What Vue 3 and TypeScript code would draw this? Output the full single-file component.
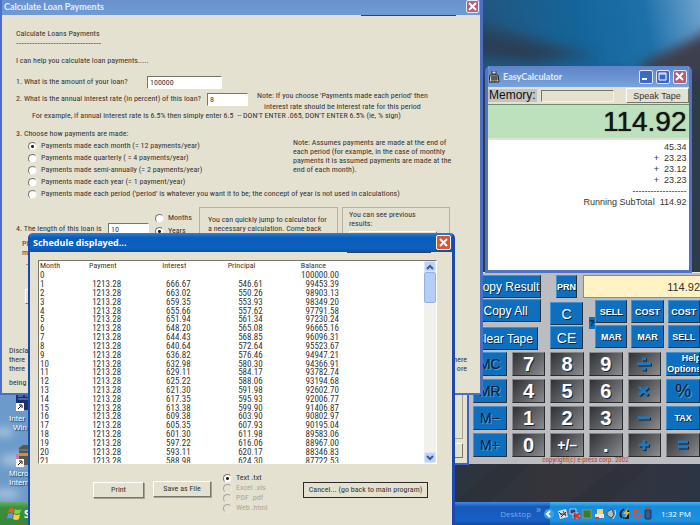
<script setup lang="ts">
import { ref } from 'vue'

const amount = ref('100000')
const rate = ref('8')
const term = ref('10')
const frequency = ref('month')
const unit = ref('years')
const format = ref('txt')
const memory = ref('')

const frequencies = [
  { id: 'month', label: 'Payments made each month (= 12 payments/year)' },
  { id: 'quarter', label: 'Payments made quarterly ( = 4 payments/year)' },
  { id: 'semi', label: 'Payments made semi-annually (= 2 payments/year)' },
  { id: 'year', label: 'Payments made each year (= 1 payment/year)' },
  { id: 'period', label: "Payments made each period ('period' is whatever you want it to be; the concept of year is not used in calculations)" },
]

const formats = [
  { id: 'txt', label: 'Text .txt', off: false },
  { id: 'xls', label: 'Excel .xls', off: true },
  { id: 'pdf', label: 'PDF .pdf', off: true },
  { id: 'html', label: 'Web .html', off: true },
]

const rows: [string, string, string, string, string][] = [
  ['0', '', '', '', '100000.00'],
  ['1', '1213.28', '666.67', '546.61', '99453.39'],
  ['2', '1213.28', '663.02', '550.26', '98903.13'],
  ['3', '1213.28', '659.35', '553.93', '98349.20'],
  ['4', '1213.28', '655.66', '557.62', '97791.58'],
  ['5', '1213.28', '651.94', '561.34', '97230.24'],
  ['6', '1213.28', '648.20', '565.08', '96665.16'],
  ['7', '1213.28', '644.43', '568.85', '96096.31'],
  ['8', '1213.28', '640.64', '572.64', '95523.67'],
  ['9', '1213.28', '636.82', '576.46', '94947.21'],
  ['10', '1213.28', '632.98', '580.30', '94366.91'],
  ['11', '1213.28', '629.11', '584.17', '93782.74'],
  ['12', '1213.28', '625.22', '588.06', '93194.68'],
  ['13', '1213.28', '621.30', '591.98', '92602.70'],
  ['14', '1213.28', '617.35', '595.93', '92006.77'],
  ['15', '1213.28', '613.38', '599.90', '91406.87'],
  ['16', '1213.28', '609.38', '603.90', '90802.97'],
  ['17', '1213.28', '605.35', '607.93', '90195.04'],
  ['18', '1213.28', '601.30', '611.98', '89583.06'],
  ['19', '1213.28', '597.22', '616.06', '88967.00'],
  ['20', '1213.28', '593.11', '620.17', '88346.83'],
  ['21', '1213.28', '588.98', '624.30', '87722.53'],
]

const tape = ['45.34', '+  23.23', '+  23.12', '+  23.23']

interface Key { t: string; k: string }
const keys: Key[] = [
  { t: 'MC', k: 'mem' }, { t: '7', k: 'num' }, { t: '8', k: 'num' }, { t: '9', k: 'num' }, { t: '÷', k: 'op' }, { t: 'Help Options', k: 'help' },
  { t: 'MR', k: 'mem' }, { t: '4', k: 'num' }, { t: '5', k: 'num' }, { t: '6', k: 'num' }, { t: '×', k: 'op' }, { t: '%', k: 'mem percent' },
  { t: 'M−', k: 'mem' }, { t: '1', k: 'num' }, { t: '2', k: 'num' }, { t: '3', k: 'num' }, { t: '−', k: 'op' }, { t: 'TAX', k: 'word' },
  { t: 'M+', k: 'mem' }, { t: '0', k: 'num' }, { t: '+/–', k: 'num sign' }, { t: '.', k: 'num' }, { t: '+', k: 'op' }, { t: '=', k: 'op' },
]
</script>

<template>
  <div class="desktop">
    <svg class="wallpaper" viewBox="0 0 700 525" preserveAspectRatio="none" aria-hidden="true">
      <defs>
        <linearGradient id="sky" x1="480" y1="40" x2="700" y2="0" gradientUnits="userSpaceOnUse">
          <stop offset="0" stop-color="#23557c" />
          <stop offset="0.45" stop-color="#14659a" />
          <stop offset="0.75" stop-color="#1d71a9" />
          <stop offset="1" stop-color="#6fa3cf" />
        </linearGradient>
        <linearGradient id="floor" x1="0" y1="0" x2="1" y2="0">
          <stop offset="0" stop-color="#2b3440" />
          <stop offset="0.4" stop-color="#35343a" />
          <stop offset="1" stop-color="#2c3544" />
        </linearGradient>
        <filter id="soft" x="-20%" y="-20%" width="140%" height="140%"><feGaussianBlur stdDeviation="6" /></filter>
        <filter id="puff" x="-50%" y="-50%" width="200%" height="200%"><feGaussianBlur stdDeviation="4" /></filter>
      </defs>
      <rect width="700" height="525" fill="#2e3b4c" />
      <rect x="470" width="230" height="110" fill="url(#sky)" />
      <g filter="url(#soft)">
        <path d="M470 20 L560 46 L600 58 L560 58 L470 50Z" fill="#274763" />
        <path d="M470 34 L530 46 L570 58 L530 62 L470 56Z" fill="#2b3e55" />
        <path d="M730 16 L690 40 L640 64 L650 130 L730 130Z" fill="#3c3f4b" />
        <path d="M460 74 H730 V480 H460Z" fill="#2e3b4c" />
      </g>
      <rect x="455" y="460" width="245" height="45" fill="url(#floor)" />
      <path d="M455 502 L500 464 L530 464 L490 502Z M570 502 L620 464 L650 464 L610 502Z" fill="#2c3038" opacity="0.6" />
      <rect y="390" width="60" height="115" fill="#6c9bca" />
      <g filter="url(#puff)" fill="#a9c3dc">
        <ellipse cx="4" cy="432" rx="10" ry="5" />
        <ellipse cx="16" cy="460" rx="16" ry="6" />
        <ellipse cx="6" cy="494" rx="14" ry="5" />
      </g>
    </svg>

    <div class="shortcuts">
      <a class="shortcut" href="#">
        <svg width="24" height="18" viewBox="0 0 24 18" aria-hidden="true">
          <rect x="0" y="0" width="24" height="16" fill="#1c2f6e" />
          <path d="M2 2h5M9 2h5M2 5h20" stroke="#7f97d8" />
          <rect x="0" y="9" width="8" height="8" fill="#fff" />
          <path d="M2 15l3-3M3 11h3v3" stroke="#111" fill="none" />
        </svg>
        <span>Inter</span><span class="inset">Win</span>
      </a>
      <a class="shortcut" href="#">
        <svg width="24" height="22" viewBox="0 0 24 22" aria-hidden="true">
          <path d="M3 3l4-3h17v20H3z" fill="#55584c" />
          <path d="M3 8h21v3H3z" fill="#d78a3c" />
          <path d="M3 5h21" stroke="#8b907c" />
          <rect x="0" y="9" width="3" height="6" fill="#c77fb2" />
          <rect x="0" y="14" width="8" height="8" fill="#fff" />
          <path d="M2 20l3-3M3 16h3v3" stroke="#111" fill="none" />
        </svg>
        <span>Micro</span><span>Intern</span>
      </a>
    </div>

    <section class="pad" aria-label="Calculator keypad">
      <div class="pad-top">
        <div class="copy-keys">
          <button class="key wide">Copy Result</button>
          <button class="key wide">Copy All</button>
          <button class="key wide clear">Clear Tape</button>
        </div>
        <div class="pad-right">
          <div class="pad-line">
            <button class="key prn">PRN</button>
            <output class="lcd">114.92</output>
          </div>
          <div class="pad-mid">
            <div class="c-keys">
              <button class="key c">C</button>
              <button class="key c">CE</button>
            </div>
            <button class="hint">?</button>
            <div class="trade">
              <button class="key small">SELL</button>
              <button class="key small">COST</button>
              <button class="key small">COST</button>
              <button class="key small">MAR</button>
              <button class="key small">MAR</button>
              <button class="key small">SELL</button>
            </div>
          </div>
        </div>
      </div>
      <div class="keys">
        <button v-for="key in keys" :key="key.t" :class="['key', key.k]" :aria-label="key.t">
          <svg v-if="key.k === 'op'" width="16" height="16" viewBox="0 0 16 16" aria-hidden="true">
            <g fill="none" stroke-width="3">
              <g stroke="#0c2338" transform="translate(1 1)">
                <path v-if="key.t === '÷'" d="M1 8h14M6 3h4M6 13h4" />
                <path v-else-if="key.t === '×'" d="M3 4l9 8M12 4l-9 8" />
                <path v-else-if="key.t === '−'" d="M2 8h12" />
                <path v-else-if="key.t === '+'" d="M3 8h10M8 3v10" />
                <path v-else d="M3 5h10M3 10h10" />
              </g>
              <g stroke="#1b78c4">
                <path v-if="key.t === '÷'" d="M1 8h14M6 3h4M6 13h4" />
                <path v-else-if="key.t === '×'" d="M3 4l9 8M12 4l-9 8" />
                <path v-else-if="key.t === '−'" d="M2 8h12" />
                <path v-else-if="key.t === '+'" d="M3 8h10M8 3v10" />
                <path v-else d="M3 5h10M3 10h10" />
              </g>
            </g>
          </svg>
          <template v-else>{{ key.t }}</template>
        </button>
      </div>
      <p class="copyright">copyright(c) e-press corp. 2002</p>
    </section>

    <section class="easy" aria-label="EasyCalculator">
      <header class="easy-title">
        <svg width="11" height="12" viewBox="0 0 11 12" aria-hidden="true">
          <path d="M3 0h4v3H3z" fill="#e8e4d2" stroke="#333" />
          <path d="M1 4h8l1 7H0z" fill="#d9d4bd" stroke="#222" />
          <path d="M2 6h7M2 8h7M3 5v6M5 5v6M7 5v6" stroke="#333" />
        </svg>
        <h2>EasyCalculator</h2>
        <button class="tb" aria-label="Minimize"><svg width="9" height="9" viewBox="0 0 9 9"><path d="M1 7h5" stroke="#fff" stroke-width="2" /></svg></button>
        <button class="tb" aria-label="Maximize"><svg width="9" height="9" viewBox="0 0 9 9"><path d="M1 1h7v7H1zM1 2h7" fill="none" stroke="#fff" /></svg></button>
        <button class="tb dim" aria-label="Close"><svg width="9" height="9" viewBox="0 0 9 9"><path d="M1 1l7 7M8 1l-7 7" stroke="#fff" stroke-width="2" /></svg></button>
      </header>
      <div class="memory">
        <label for="mem">Memory:</label>
        <input id="mem" v-model="memory" />
        <button class="speak">Speak Tape</button>
      </div>
      <output class="result">114.92</output>
      <div class="tape">
        <p v-for="(line, i) in tape" :key="i">{{ line }}</p>
        <p>------------------</p>
        <p>Running SubTotal&nbsp; 114.92</p>
      </div>
    </section>

    <div class="back"><div class="back-group"></div><div class="back-button"></div></div>

    <section class="loan" aria-label="Calculate Loan Payments">
      <header class="loan-title">
        <h1>Calculate Loan Payments</h1>
        <button class="tb dim" aria-label="Close"><svg width="9" height="9" viewBox="0 0 9 9"><path d="M1 1l7 7M8 1l-7 7" stroke="#fff" stroke-width="2" /></svg></button>
      </header>
      <div class="edge"></div>
      <div class="loan-body">
        <h3>Calculate Loans Payments</h3>
        <p class="dashes">--------------------------------</p>
        <p class="intro">I can help you calculate loan payments.....</p>
        <div class="ask">
          <label for="amount" class="q1">1. What is the amount of your loan?</label>
          <input id="amount" v-model="amount" class="field big" />
        </div>
        <div class="ask two">
          <label for="rate">2. What is the annual interest rate (in percent) of this loan?</label>
          <input id="rate" v-model="rate" class="field" />
          <p class="note">Note: If you choose 'Payments made each period' then<br />interest rate should be interest rate for this period</p>
        </div>
        <p class="example">For example, if annual interest rate is 6.5% then simply enter 6.5&nbsp; -- DON'T ENTER .065, DON'T ENTER 6.5% (ie, % sign)</p>
        <div class="choose">
          <fieldset>
            <legend>3. Choose how payments are made:</legend>
            <label v-for="f in frequencies" :key="f.id" class="radio">
              <input v-model="frequency" type="radio" name="frequency" :value="f.id" />{{ f.label }}
            </label>
          </fieldset>
          <p class="assume">Note: Assumes payments are made at the end of<br />each period (for example, in the case of monthly<br />payments it is assumed payments are made at the<br />end of each month).</p>
        </div>
        <div class="length">
          <div class="length-left">
            <label for="term">4. The length of this loan is</label>
            <input id="term" v-model="term" class="field" />
            <div class="units">
              <label class="radio"><input v-model="unit" type="radio" name="unit" value="months" />Months</label>
              <label class="radio"><input v-model="unit" type="radio" name="unit" value="years" />Years</label>
            </div>
          </div>
          <div class="group jump">You can quickly jump to calculator for<br />a necessary calculation. Come back</div>
          <div class="group prev">You can see previous<br />results:<div class="prev-box"></div></div>
        </div>
        <div class="side">
          <p>Pl</p><p>m</p><p class="dash">-</p>
          <div class="side-button"></div>
        </div>
        <div class="disclaimer">
          <p><span>Discla</span></p>
          <p><span>there</span><span>here</span></p>
          <p><span>there</span><span>ore</span></p>
          <p class="last"><span>being</span></p>
        </div>
      </div>
    </section>

    <footer class="taskbar">
      <button class="start">
        <svg width="15" height="14" viewBox="0 0 15 14" aria-hidden="true">
          <path d="M2 2q3-2 5 0l-1 4q-2-2-5 0z" fill="#ee5a2a" />
          <path d="M8 2q3 2 6 0l-1 4q-3 2-6 0z" fill="#8ccf3f" />
          <path d="M1 7q3-2 5 0l-1 5q-2-2-5 0z" fill="#5a95ee" />
          <path d="M7 7q3 2 6 0l-1 5q-3 2-6 0z" fill="#f8cf38" />
        </svg>
        <span>S</span>
      </button>
      <div class="toolbar"><span>Desktop</span><span class="more">»</span></div>
      <div class="tray">
        <button class="chevron" aria-label="Show hidden icons"><svg width="10" height="10" viewBox="0 0 10 10"><circle cx="5" cy="5" r="5" fill="#3f9cf0" /><path d="M6 2L3 5l3 3" fill="none" stroke="#fff" stroke-width="2" /></svg></button>
        <svg class="tray-icons" width="96" height="12" viewBox="0 0 96 12" aria-hidden="true">
          <path d="M0 3l8-2 2 8-8 2z" fill="#ddd" /><path d="M1 4l3 3M5 3l3 5M3 9l5-5M2 6h6" stroke="#333" />
          <path d="M12 1h6v5h-6zM15 5h6v5h-6z" fill="#2a3f8a" stroke="#b9c9e8" /><path d="M16 5l6 6M22 5l-6 6" stroke="#e3342c" stroke-width="2" />
          <rect x="25" y="2" width="8" height="8" fill="#3a7a2c" stroke="#8a9a62" />
          <path d="M39 1h6v5h-6z" fill="#f3d668" /><path d="M37 6h9v4h-9z" fill="#e6e6e6" /><path d="M37 10h4" stroke="#d8402c" stroke-width="2" />
          <path d="M49 4l5-3 2 6-3 3-4-3z" fill="#b5b9bd" stroke="#4a5058" /><path d="M57 2q2 4-2 9" fill="none" stroke="#dfe6ee" />
          <path d="M66 1q-6 4-2 9M70 2v8h-5" fill="none" stroke="#14213f" stroke-width="2" /><path d="M70 0l-5 6h3l-2 5 6-7h-3z" fill="#f6b02c" />
          <path d="M76 5q1-4 5-2M82 5q1 5-4 5M77 9q-2-1-1-3" fill="none" stroke="#e0502c" stroke-width="2" />
          <rect x="87" y="2" width="6" height="9" rx="1" fill="#37598f" stroke="#1d2f55" /><path d="M88 1h4" stroke="#c0392b" stroke-width="2" />
        </svg>
        <time>1:32 PM</time>
      </div>
    </footer>

    <section class="schedule" aria-label="Schedule displayed">
      <header class="schedule-title">
        <h2>Schedule displayed...</h2>
        <button class="tb hot" aria-label="Close"><svg width="9" height="9" viewBox="0 0 9 9"><path d="M1 1l7 7M8 1l-7 7" stroke="#fff" stroke-width="2" /></svg></button>
      </header>
      <div class="edge"></div>
      <div class="list">
        <div class="sheet">
          <table>
            <thead>
              <tr><th class="m">Month</th><th class="p">Payment</th><th class="i">Interest</th><th class="r">Principal</th><th class="b">Balance</th></tr>
            </thead>
            <tbody>
              <tr v-for="row in rows" :key="row[0]">
                <td class="m">{{ row[0] }}</td><td class="p">{{ row[1] }}</td><td class="i">{{ row[2] }}</td><td class="r">{{ row[3] }}</td><td class="b">{{ row[4] }}</td>
              </tr>
            </tbody>
          </table>
        </div>
        <div class="scroll">
          <button class="arrow" aria-label="Scroll up"><svg width="8" height="6" viewBox="0 0 8 6"><path d="M1 5l3-3 3 3" fill="none" stroke="#3c5c94" stroke-width="2" /></svg></button>
          <div class="thumb"></div>
          <button class="arrow down" aria-label="Scroll down"><svg width="8" height="6" viewBox="0 0 8 6"><path d="M1 1l3 3 3-3" fill="none" stroke="#3c5c94" stroke-width="2" /></svg></button>
        </div>
      </div>
      <div class="actions">
        <button class="classic print">Print</button>
        <button class="classic save">Save as File</button>
        <div class="formats">
          <label v-for="f in formats" :key="f.id" :class="['radio', { off: f.off }]">
            <input v-model="format" type="radio" name="format" :value="f.id" :disabled="f.off" />{{ f.label }}
          </label>
        </div>
        <button class="classic cancel">Cancel... (go back to main program)</button>
      </div>
    </section>
  </div>
</template>

<style>
body { margin: 0; background: #2e3b4c; }
</style>

<style scoped>
* { box-sizing: border-box; }
h1, h2, h3, p, fieldset, legend { margin: 0; padding: 0; border: 0; font-size: inherit; font-weight: inherit; }
button, input { font: inherit; color: inherit; padding: 0; margin: 0; border-radius: 0; }
button { border: 0; background: none; white-space: nowrap; }
svg { display: block; flex: none; }

.desktop {
  position: relative;
  height: 100vh;
  min-height: 525px;
  overflow: hidden;
  display: flex;
  flex-direction: column;
  justify-content: flex-end;
  font: 8px/12px "Roboto Condensed", "Liberation Sans", sans-serif;
  color: #363532;
}
.wallpaper { position: absolute; inset: 0; width: 100%; height: 100%; }

.shortcuts { position: absolute; left: 9px; top: 394px; display: flex; flex-direction: column; gap: 13px; }
.shortcut { display: flex; flex-direction: column; color: #fff; text-decoration: none; font: 8px/9px "Liberation Sans", sans-serif; text-shadow: 1px 1px 1px #1d3350; }
.shortcut svg { margin: 0 0 2px 7px; }
.inset { padding-left: 4px; }

/* window frames */
.loan, .schedule, .easy, .back, .pad { position: absolute; }
.loan { left: 0; top: 0; width: 69%; background: #e5e1d1; border: solid #4a6fc8; border-width: 0 3px 2px 2px; }
.loan-title, .schedule-title, .easy-title { display: flex; align-items: center; font: bold 9px/14px "Lato", "Noto Sans", sans-serif; }
.loan-title h1, .schedule-title h2, .easy-title h2 { flex: 1; white-space: nowrap; font-weight: bold; }
.loan-title { height: 15px; background: linear-gradient(#6a90cc, #6f9cd6); color: #e4ecf9; padding: 0 1px 2px 2px; }
.edge { width: 20%; margin-left: auto; margin-right: 5%; height: 1px; background: #33435c; }
.tb { width: 13px; height: 13px; flex: none; display: grid; place-items: center; border: 1px solid #dfe6f5; border-radius: 2px; background: #3c68c6; }
.tb.dim { background: #b0627f; }
.tb.hot { background: #dc5532; border-color: #fff; width: 15px; height: 15px; }

.loan-body { padding: 12px 7px 6px; white-space: nowrap; }
.loan-body h3 { padding-left: 7px; }
.dashes { padding-left: 7px; font-family: "Liberation Sans", sans-serif; line-height: 6px; }
.intro { padding: 9px 0 0 7px; }
.ask { display: flex; align-items: center; padding-left: 7px; margin-top: 8px; height: 14px; }
.q1 { width: 131px; }
.field { width: 41px; height: 13px; background: #fff; border: 1px solid #fff; border-top-color: #77756c; border-left-color: #77756c; padding-left: 2px; flex: none; line-height: 11px; }
.field.big { width: 75px; }
.two { margin-top: 3px; }
.two label { width: 191px; }
.note { margin-left: 9px; padding-top: 4px; text-align: center; line-height: 11px; }
.example { padding: 4px 0 0 23px; }
.choose { display: flex; align-items: flex-start; padding: 6px 0 0 7px; }
.choose fieldset { min-width: 0; width: 277px; flex: none; }
.choose legend { display: block; }
.assume { line-height: 9px; padding-top: 10px; }
.radio { display: flex; align-items: center; gap: 4px; height: 12px; }
.radio input { appearance: none; width: 9px; height: 9px; flex: none; border-radius: 50%; background: #fff; border: 1px solid #ece9dc; border-top-color: #77756c; border-left-color: #77756c; }
.radio input:checked { background: radial-gradient(circle, #222 0 1px, #fff 2px); }
.radio input:disabled { background: #e5e1d1; border-top-color: #a8a598; border-left-color: #a8a598; }
.choose .radio { padding-left: 12px; }
.length { display: flex; height: 54px; margin-top: 7px; }
.length-left { display: flex; width: 190px; flex: none; padding: 5px 0 0 7px; }
.length-left > label { padding-top: 11px; width: 92px; }
.length-left .field { margin-top: 11px; }
.units { padding-left: 6px; display: flex; flex-direction: column; gap: 1px; }
.group { border: 1px solid #b5b1a1; line-height: 9px; }
.jump { width: 139px; padding: 7px 0 0 8px; }
.prev { width: 108px; margin-left: 4px; padding: 2px 0 0 6px; }
.prev-box { width: 88px; height: 10px; margin-top: 3px; border: 1px solid #77756c; border-top-color: #fff; border-left-color: #fff; }
.side { margin-top: -22px; height: 107px; padding-left: 13px; line-height: 9px; }
.dash { padding: 3px 0 0 4px; }
.side-button { width: 60px; height: 15px; margin: 20px 0 0 3px; border: 1px solid #77756c; border-top-color: #fff; border-left-color: #fff; }
.disclaimer { line-height: 9px; padding-right: 6px; }
.disclaimer p { display: flex; justify-content: space-between; }
.disclaimer .last { padding-top: 5px; }

.back { left: 30%; top: 390px; width: 37%; height: 75px; background: #e5e1d1; border: 2px solid #3d63c0; display: flex; flex-direction: column; gap: 4px; padding: 2px 4px 5px; }
.back-group { flex: 1; border: 1px solid #a7a393; }
.back-button { height: 15px; border: 1px solid #fff; border-right-color: #77756c; border-bottom-color: #77756c; }

/* EasyCalculator */
.easy { left: 69%; top: 66px; width: 29.5%; height: 207px; margin-left: 2px; display: flex; flex-direction: column; border: 3px solid #5273c2; border-top: 0; border-radius: 5px 5px 0 0; background: #fff; overflow: hidden; }
.easy-title { height: 21px; flex: none; margin: 0 -3px; padding: 0 5px 0 4px; gap: 3px; background: linear-gradient(#5f83c8, #76a3dc); color: #e4ecf9; }
.easy-title .tb { width: 14px; height: 14px; }
.memory { display: flex; align-items: center; height: 17px; flex: none; background: #e5e1d1; font-family: "Liberation Sans", sans-serif; }
.memory label { font-size: 12px; line-height: 13px; background: #c3c3c0; color: #111; padding: 0 1px; }
.memory input { margin-left: 4px; flex: 1; min-width: 0; height: 12px; background: #e5e1d1; border: 1px solid #f6f4ea; border-top-color: #77756c; border-left-color: #77756c; }
.speak { margin-left: 12px; width: 63px; height: 15px; border: 1px solid #fff; border-right-color: #77756c; border-bottom-color: #77756c; background: #e5e1d1; font-size: 9px; line-height: 12px; }
.result { display: block; height: 34px; flex: none; background: #bde0bd; border-top: 1px solid #6f8a6f; text-align: right; color: #151515; font: 28px/34px "Liberation Sans", sans-serif; text-shadow: 0 0 1px #151515; padding-right: 2px; }
.tape { border-top: 2px solid #e5e1d1; flex: 1; text-align: right; white-space: pre; padding: 2px 2px 0 0; font: 9px/11px "Liberation Sans", sans-serif; }

/* keypad */
.pad { left: 67%; right: 0; top: 272px; height: 192px; background: #bcbdc1; border-top: 1px solid #e8e8ea; margin-left: -1px; padding: 2px 0 0 5px; overflow: hidden; display: flex; flex-direction: column; font-family: "Liberation Sans", sans-serif; }
.key { background: #0d6fbe; color: #fff; border: 1px solid #3c93d8; border-right-color: #26323e; border-bottom-color: #26323e; text-shadow: 1px 1px 0 #10283f; }
.pad-top { display: flex; height: 80px; }
.copy-keys { width: 30%; display: flex; flex-direction: column; gap: 1px; }
.wide { height: 23px; font-size: 12px; padding-right: 3px; }
.wide.clear { margin: 4px 3px 0 0; }
.pad-right { flex: 1; display: flex; flex-direction: column; gap: 2px; padding-left: 9px; min-width: 0; }
.pad-line { display: flex; gap: 6px; padding-left: 6px; }
.prn { width: 21px; height: 23px; font-size: 9px; font-weight: bold; }
.lcd { flex: 1; height: 23px; background: #fff2c4; border: 1px solid #8d8b80; border-right: 0; text-align: right; font-size: 11px; line-height: 22px; }
.pad-mid { display: flex; }
.c-keys { width: 33px; display: flex; flex-direction: column; gap: 1px; padding-top: 2px; }
.c { height: 23px; font-size: 14px; }
.hint { width: 6px; height: 12px; margin: 17px 0 0 6px; background: #0d6fbe; color: #0b1c30; font-size: 9px; font-weight: bold; line-height: 12px; }
.trade { flex: 1; display: grid; grid-template-columns: repeat(3, 1fr); grid-auto-rows: 23px; gap: 2px 4px; }
.small { font-size: 9px; font-weight: bold; }
.keys { display: grid; grid-template-columns: repeat(6, 1fr); grid-auto-rows: 24px; gap: 3px 5px; }
.keys .key { min-width: 0; display: grid; place-items: center; overflow: hidden; }
.key.mem { color: #0a1a2a; text-shadow: 1px 1px 0 #4f9cd8; font-size: 14px; }
.key.percent { font-size: 18px; }
.key.num, .key.op { background: linear-gradient(135deg, #303134, #6e6f73 70%, #8d8e92); border-color: #87888c #2a2b2e #2a2b2e #87888c; }
.key.num { font: bold 20px/20px "Liberation Sans", sans-serif; }
.key.sign { font-size: 14px; }
.key.help { white-space: normal; font: bold 9px/11px "Liberation Sans", sans-serif; text-align: right; }
.key.word { font-size: 9px; font-weight: bold; }
.copyright { font: 7px/7px "Roboto Condensed", "Liberation Sans", sans-serif; color: #b8402c; text-align: center; padding-right: 2px; }

/* taskbar */
.taskbar { position: relative; display: flex; height: 23px; background: linear-gradient(#3d8de8, #1659b8 20%, #1660c4 80%, #124a9c); font: 8px/23px "Open Sans", "Noto Sans", sans-serif; color: #fff; }
.start { width: 70px; display: flex; align-items: center; gap: 2px; padding-left: 7px; background: linear-gradient(#63b063, #3a8f3c 25%, #37883a); font-weight: bold; font-size: 11px; }
.toolbar { flex: 1; display: flex; justify-content: flex-end; gap: 5px; padding-right: 9px; color: #79a8e4; }
.more { font-size: 10px; line-height: 14px; }
.tray { width: 150px; display: flex; align-items: center; background: linear-gradient(#4ab4f4, #168ad8 20%, #1a93e4 80%, #1272b8); }
.chevron { margin-left: -6px; }
.tray-icons { margin-left: 4px; }
.tray time { margin-left: 7px; }

/* schedule */
.schedule { left: 4%; top: 233px; bottom: 0; width: 61%; background: #e5e1d1; border: solid #1c48b0; border-width: 0 3px 0 2px; border-radius: 5px 5px 0 0; overflow: hidden; }
.schedule-title { height: 19px; background: linear-gradient(#2f7fd8, #0a5cba 25%, #0d62bf 80%, #0a50a4); color: #fff; padding: 0 1px 0 3px; font-family: "Open Sans", "Noto Sans", sans-serif; }
.list { display: flex; margin: 7px 15px 0 8px; height: 204px; overflow: hidden; background: #fff; border: 1px solid #fff; border-top-color: #77756c; border-left-color: #77756c; }
.sheet { flex: 1; min-width: 0; }
table { width: 100%; height: 204px; border-collapse: collapse; table-layout: fixed; line-height: 8px; }
tbody { font-size: 9px; }
th, td { padding: 0; text-align: right; }
th { text-align: left; font-weight: normal; padding: 1px 0; }
.m { width: 13%; text-align: left; padding-left: 1px; }
.p { width: 19%; }
.i { width: 17%; }
.r { width: 19%; }
td.p { padding-right: 41px; }
td.i { padding-right: 37px; }
td.r { padding-right: 38px; }
td.b { padding-right: 85px; }
.scroll { width: 12px; display: flex; flex-direction: column; background: #f1f0ea; }
.arrow { height: 11px; display: grid; place-items: center; background: #bdd2f8; border: 1px solid #dbe6fb; border-radius: 2px; }
.arrow.down { margin-top: auto; }
.thumb { height: 31px; background: #b7cdf6; border: 1px solid #94b0e6; border-radius: 2px; }
.actions { display: flex; align-items: flex-start; padding: 17px 24px 0 63px; }
.classic { height: 16px; background: #e5e1d1; border: 1px solid #fff; border-right-color: #77756c; border-bottom-color: #77756c; box-shadow: 1px 1px 0 #a7a393; }
.print { width: 51px; margin-top: 1px; }
.save { width: 58px; margin-left: 9px; }
.formats { margin: -8px 0 0 12px; flex: 1; }
.formats .radio { height: 10px; }
.off { color: #aaa799; }
.cancel { width: 125px; margin-top: 1px; border: 1px solid #2b2b2b; box-shadow: none; }
</style>
